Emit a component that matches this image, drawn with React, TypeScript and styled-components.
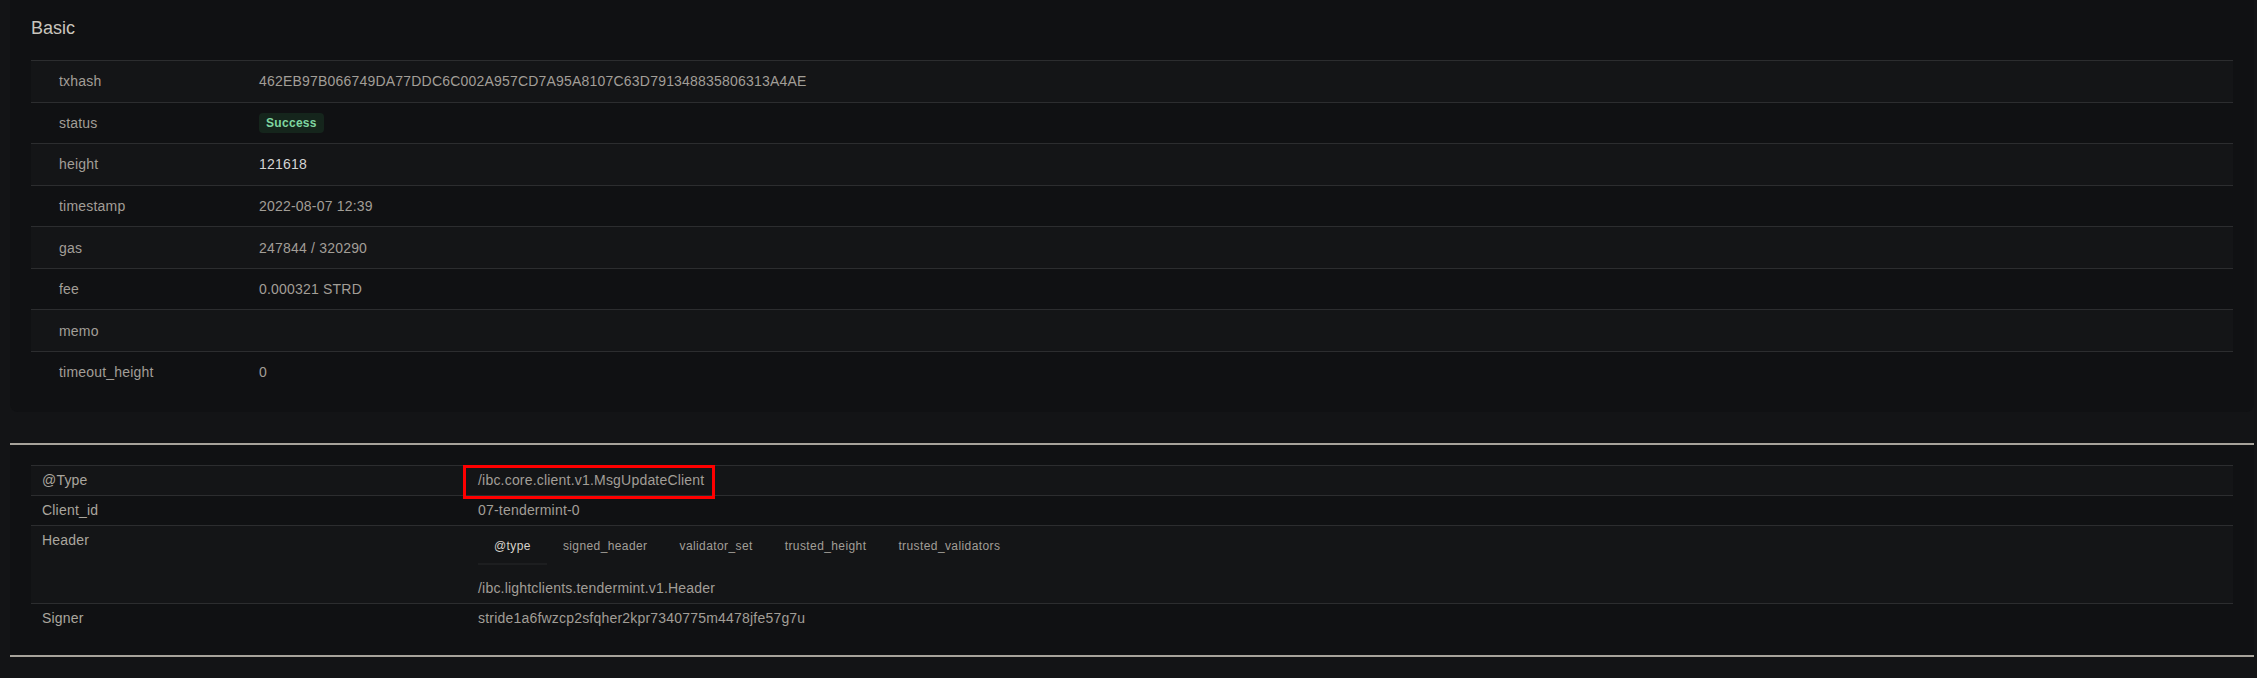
import React from 'react';
import styled, { createGlobalStyle } from 'styled-components';

const GlobalStyle = createGlobalStyle`
	body {
		margin: 0;
		background-color: #131416;
		font-family: "Liberation Sans", Arial, sans-serif;
	}
`;

const Page = styled.div`
	min-height: 678px;
	padding: 0 3px 0 10px;
	box-sizing: border-box;
`;

const Card = styled.div`
	background-color: #101113;
	border-radius: 0 0 8px 8px;
	padding: 14px 21px 19px;
`;

const Title = styled.h2`
	margin: 0 0 18px;
	font-size: 18px;
	line-height: 28px;
	font-weight: 400;
	color: #c9c5bd;
`;

const InfoRow = styled.div<{ striped?: boolean }>`
	display: flex;
	align-items: center;
	height: 41.57px;
	box-sizing: border-box;
	border-top: 1px solid #2c2d2f;
	background-color: ${(p) => (p.striped ? '#141517' : 'transparent')};
`;

const InfoLabel = styled.div`
	width: 228px;
	padding-left: 28px;
	box-sizing: border-box;
	font-size: 14px;
	letter-spacing: 0.2px;
	color: #a29e97;
`;

const InfoValue = styled.div<{ bright?: boolean }>`
	flex: 1;
	font-size: 14px;
	font-weight: 400;
	letter-spacing: 0.2px;
	color: ${(p) => (p.bright ? '#d4d4d4' : '#a29e97')};
`;

const Badge = styled.span`
	display: inline-flex;
	align-items: center;
	height: 20px;
	padding: 0 7px;
	border-radius: 4px;
	background-color: #15251c;
	color: #7fd6a0;
	font-size: 12px;
	font-weight: 700;
	letter-spacing: 0.3px;
`;

const Section = styled.div`
	margin-top: 31px;
	background-color: #101113;
	border-top: 2px solid #a7a39b;
	border-bottom: 2px solid #a7a39b;
	padding: 20px 21px 22px;
`;

const MsgRow = styled.div<{ striped?: boolean }>`
	display: flex;
	align-items: flex-start;
	border-top: 1px solid #2c2d2f;
	background-color: ${(p) => (p.striped ? '#141517' : 'transparent')};
`;

const MsgLabel = styled.div`
	width: 436px;
	padding: 5px 11px;
	box-sizing: border-box;
	font-size: 14px;
	line-height: 19px;
	letter-spacing: 0.2px;
	color: #aaa69e;
`;

const MsgValue = styled.div`
	flex: 1;
	padding: 5px 11px;
	font-size: 14px;
	line-height: 19px;
	letter-spacing: 0.2px;
	color: #a29e97;
`;

const Highlight = styled.span`
	position: relative;
	display: inline-block;

	&::after {
		content: '';
		position: absolute;
		left: -15px;
		right: -11px;
		top: -6px;
		bottom: -9px;
		border: 3px solid #ff0000;
	}
`;

const TabList = styled.div`
	display: flex;
`;

const Tab = styled.div<{ active?: boolean }>`
	display: flex;
	align-items: center;
	height: 34px;
	box-sizing: border-box;
	padding: 0 16px;
	font-size: 12px;
	letter-spacing: 0.4px;
	color: ${(p) => (p.active ? '#d6d2ca' : '#a29e97')};
	border-bottom: 2px solid ${(p) => (p.active ? '#1d1e20' : 'transparent')};
`;

const TabContent = styled.div`
	margin-top: 14px;
`;

const basic = [
	{ label: 'txhash', value: '462EB97B066749DA77DDC6C002A957CD7A95A8107C63D791348835806313A4AE' },
	{ label: 'status', value: 'Success', badge: true },
	{ label: 'height', value: '121618', bright: true },
	{ label: 'timestamp', value: '2022-08-07 12:39' },
	{ label: 'gas', value: '247844 / 320290' },
	{ label: 'fee', value: '0.000321 STRD' },
	{ label: 'memo', value: '' },
	{ label: 'timeout_height', value: '0' },
];

const tabs = ['@type', 'signed_header', 'validator_set', 'trusted_height', 'trusted_validators'];

const App: React.FC = () => {
	return (
		<Page>
			<GlobalStyle />
			<Card>
				<Title>Basic</Title>
				{basic.map((row, i) => (
					<InfoRow key={row.label} striped={i % 2 === 0}>
						<InfoLabel>{row.label}</InfoLabel>
						<InfoValue bright={row.bright}>
							{row.badge ? <Badge>{row.value}</Badge> : row.value}
						</InfoValue>
					</InfoRow>
				))}
			</Card>
			<Section>
				<MsgRow striped>
					<MsgLabel>@Type</MsgLabel>
					<MsgValue>
						<Highlight>/ibc.core.client.v1.MsgUpdateClient</Highlight>
					</MsgValue>
				</MsgRow>
				<MsgRow>
					<MsgLabel>Client_id</MsgLabel>
					<MsgValue>07-tendermint-0</MsgValue>
				</MsgRow>
				<MsgRow striped>
					<MsgLabel>Header</MsgLabel>
					<MsgValue>
						<TabList>
							{tabs.map((t, i) => (
								<Tab key={t} active={i === 0}>
									{t}
								</Tab>
							))}
						</TabList>
						<TabContent>/ibc.lightclients.tendermint.v1.Header</TabContent>
					</MsgValue>
				</MsgRow>
				<MsgRow>
					<MsgLabel>Signer</MsgLabel>
					<MsgValue>stride1a6fwzcp2sfqher2kpr7340775m4478jfe57g7u</MsgValue>
				</MsgRow>
			</Section>
		</Page>
	);
};

export default App;
